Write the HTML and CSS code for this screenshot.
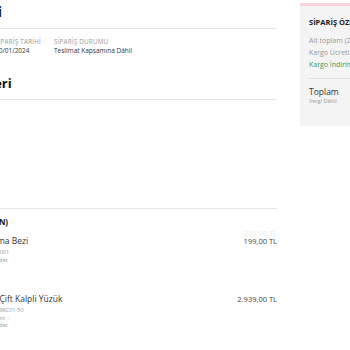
FILE: index.html
```html
<!DOCTYPE html>
<html lang="tr">
  <head>
    <meta charset="utf-8" />
    <title>Sipariş Detayı</title>
    <link rel="stylesheet" href="styles.css">
  </head>
  <body>
    <div class="page">
      <div class="main">
        <h1 class="section-title first">Sipariş Bilgileri</h1>

        <div class="meta">
          <div>
            <div class="meta-label">Sipariş No</div>
            <div class="meta-value">1000245871</div>
          </div>
          <div>
            <div class="meta-label">Sipariş Tarihi</div>
            <div class="meta-value">20/01/2024</div>
          </div>
          <div>
            <div class="meta-label">Sipariş Durumu</div>
            <div class="meta-value">Teslimat Kapsamına Dâhil</div>
          </div>
        </div>

        <h2 class="section-title second">Teslimat Bilgileri</h2>

        <div class="address"></div>

        <div class="items-title">SİPARİŞ ÜRÜNLERİ (2 ÜRÜN)</div>

        <div class="item">
          <div class="item-info">
            <div class="item-name short">Özel Parlatma Bezi</div>
            <div class="item-sub">Ürün Kodu: GB100001</div>
            <div class="item-sub">Sipariş Miktarı: 1 Adet</div>
          </div>
          <div class="item-price">
            <div class="old-price">249,00 TL</div>
            <div>199,00 TL</div>
          </div>
        </div>

        <div class="item">
          <div class="item-info">
            <div class="item-name">Zirkon Taşlı Çift Kalpli Yüzük</div>
            <div class="item-sub">Ürün Kodu: KGY1198C01-50</div>
            <div class="item-sub">Yüzük Ölçüsü Seçimi: -</div>
            <div class="item-sub">Sipariş Miktarı: 1 Adet</div>
          </div>
          <div class="item-price">
            <div>2.939,00 TL</div>
          </div>
        </div>
      </div>

      <div class="summary">
        <div class="summary-title">SİPARİŞ ÖZETİ</div>
        <div class="summary-row">Alt toplam (2 Ürün)</div>
        <div class="summary-row">Kargo Ücreti</div>
        <div class="summary-row discount">Kargo İndirimi</div>
        <div class="summary-total">
          <div class="total-label">Toplam</div>
          <div class="total-note">Vergi Dâhil</div>
        </div>
      </div>
    </div>
  </body>
</html>
```

FILE: styles.css
```css
html, body {
  margin: 0;
  overflow: hidden;
}
body {
  background-color: white;
  color: #333;
  font-family: "Open Sans", sans-serif;
}
.page {
  display: flex;
  gap: 23px;
  margin-left: -97px;
}
.main {
  flex: none;
  width: 374px;
}
.section-title {
  border-bottom: 1px solid #e6e6e6;
  color: #111;
  font-size: 13px;
  font-weight: 700;
  line-height: 20px;
  margin: 2px 0 0 0;
  padding-bottom: 6px;
}
.section-title.first {
  font-size: 14px;
  letter-spacing: -0.3px;
}
.section-title.second {
  line-height: 18px;
  margin-top: 18px;
  padding-bottom: 7px;
}
.meta {
  display: grid;
  grid-template-columns: 92px 59px auto;
  margin-top: 8px;
}
.meta-label {
  color: #999;
  font-size: 6.3px;
  letter-spacing: 0.2px;
  line-height: 9px;
  text-transform: uppercase;
}
.meta-value {
  color: #333;
  font-size: 6.5px;
  line-height: 10px;
}
.address {
  border-bottom: 1px solid #e6e6e6;
  height: 108px;
}
.items-title {
  color: #111;
  font-size: 8px;
  font-weight: 700;
  letter-spacing: -0.25px;
  line-height: 12px;
  margin-top: 7px;
}
.item {
  display: flex;
  justify-content: space-between;
  padding: 1px 0 22px 0;
}
.item-info {
  padding: 6px 0 0 49px;
}
.item-name {
  color: #333;
  font-size: 8.5px;
  line-height: 12px;
  margin-bottom: 2px;
}
.item-name.short {
  margin-left: 2px;
}
.item-sub {
  color: #999;
  font-size: 5.5px;
  line-height: 7.5px;
}
.item-price {
  color: #444;
  font-size: 7.5px;
  line-height: 8px;
  padding-top: 8px;
  text-align: right;
}
.item-price .old-price {
  color: #ececec;
  margin-top: -8px;
}
.summary {
  background-color: #f4f4f4;
  border-top: 3px solid #f8d3dc;
  box-sizing: border-box;
  flex: none;
  height: 123px;
  margin-top: 3px;
  padding: 10px 12px 0 9px;
  width: 160px;
}
.summary-title {
  color: #222;
  font-size: 7.5px;
  font-weight: 700;
  line-height: 12px;
  margin-bottom: 7px;
}
.summary-row {
  color: #999;
  font-size: 7px;
  line-height: 12px;
}
.summary-row.discount {
  color: #3c9a5f;
}
.summary-total {
  border-top: 1px solid #e0e0e0;
  margin-top: 7px;
  padding-top: 7px;
}
.total-label {
  color: #333;
  font-size: 8.5px;
  line-height: 12px;
}
.total-note {
  color: #999;
  font-size: 5.5px;
  line-height: 7px;
}
```
